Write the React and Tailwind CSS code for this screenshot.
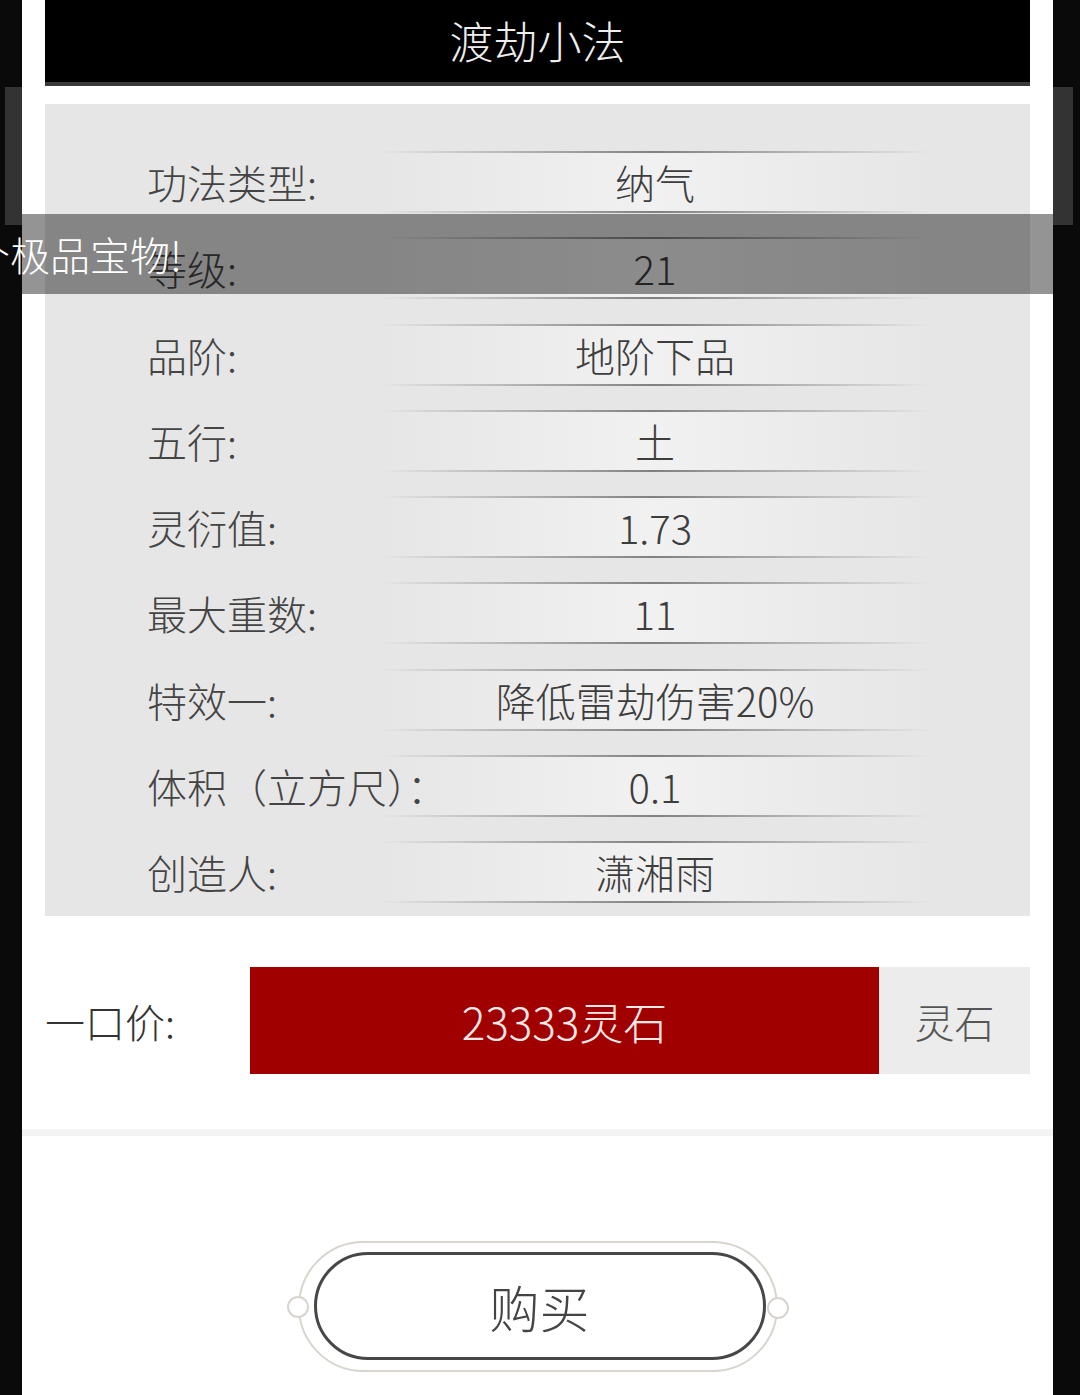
const FONT = { fontFamily: '"Noto Sans CJK SC", "Noto Sans", sans-serif' };

const rows = [
  { label: "功法类型:", value: "纳气" },
  { label: "等级:", value: "21" },
  { label: "品阶:", value: "地阶下品" },
  { label: "五行:", value: "土" },
  { label: "灵衍值:", value: "1.73" },
  { label: "最大重数:", value: "11" },
  { label: "特效一:", value: "降低雷劫伤害20%" },
  { label: "体积（立方尺）：", value: "0.1" },
  { label: "创造人:", value: "潇湘雨" },
];

function InfoRow({ label, value }) {
  return (
    <div className="flex h-[86.25px] items-center">
      <div className="relative z-10 w-[335px] shrink-0 whitespace-nowrap pl-[102px] text-[40px] font-light leading-none text-[#444]">
        {label}
      </div>
      <div className="flex h-[62px] w-[550px] flex-col">
        <div className="h-[2px] bg-gradient-to-r from-transparent via-[#808080] to-transparent" />
        <div className="flex flex-1 items-center justify-center bg-gradient-to-r from-[#e6e6e6] via-[#f1f1f1] to-[#e6e6e6] text-[40px] font-light leading-none text-[#3d3d3d]">
          {value}
        </div>
        <div className="h-[2px] bg-gradient-to-r from-transparent via-[#808080] to-transparent" />
      </div>
    </div>
  );
}

function BuyButton() {
  return (
    <div className="relative mx-auto h-[131px] w-[480px] rounded-full border-2 border-[#d8d5cf] pb-[10px] pl-[14px] pr-[10px] pt-[9px]">
      <div className="flex h-full items-center justify-center rounded-full border-[3px] border-[#474747] text-[50px] font-light text-[#444]">
        购买
      </div>
      <span className="absolute left-[-13px] top-[53px] h-[22px] w-[22px] rounded-full border-2 border-[#d8d5cf] bg-white" />
      <span className="absolute right-[-13px] top-[54px] h-[22px] w-[22px] rounded-full border-2 border-[#d8d5cf] bg-white" />
    </div>
  );
}

export default function App() {
  return (
    <div className="relative h-[1395px] w-[1080px] overflow-hidden bg-[#0a0a0a]" style={FONT}>
      {/* card behind the modal */}
      <div className="absolute left-[5px] top-[87px] h-[138px] w-[1068px] bg-[#333]" />

      <div className="relative ml-[22px] h-full w-[1031px] bg-white px-[23px]">
        <div className="flex h-[86px] items-center justify-center border-b-4 border-[#3a3a3a] bg-black pb-[2px] text-[44px] font-light text-[#eee]">
          渡劫小法
        </div>

        <div className="mt-[18px] h-[812px] bg-[#e6e6e6] pt-[35px]">
          {rows.map((r) => (
            <InfoRow key={r.label} {...r} />
          ))}
        </div>

        <div className="mt-[51px] flex h-[107px] items-stretch">
          <div className="flex w-[205px] items-center text-[40px] font-light text-[#333]">一口价:</div>
          <div className="flex w-[630px] items-center justify-center bg-[#a00000] text-[44px] font-light text-[#fbe9e9]">
            23333灵石
          </div>
          <div className="flex w-[151px] items-center justify-center bg-[#ececec] text-[40px] font-light text-[#555]">
            灵石
          </div>
        </div>

        <div className="-mx-[23px] mt-[55px] h-[7px] bg-[#f3f3f3]" />

        <div className="mt-[105px]">
          <BuyButton />
        </div>
      </div>

      {/* toast */}
      <div className="absolute left-[22px] top-[214px] z-20 h-[80px] w-[1031px] bg-black/[0.42]" />
      <div className="absolute left-[-30px] top-[214px] z-20 flex h-[80px] items-center whitespace-nowrap text-[40px] font-light text-white">
        个极品宝物!
      </div>
    </div>
  );
}
